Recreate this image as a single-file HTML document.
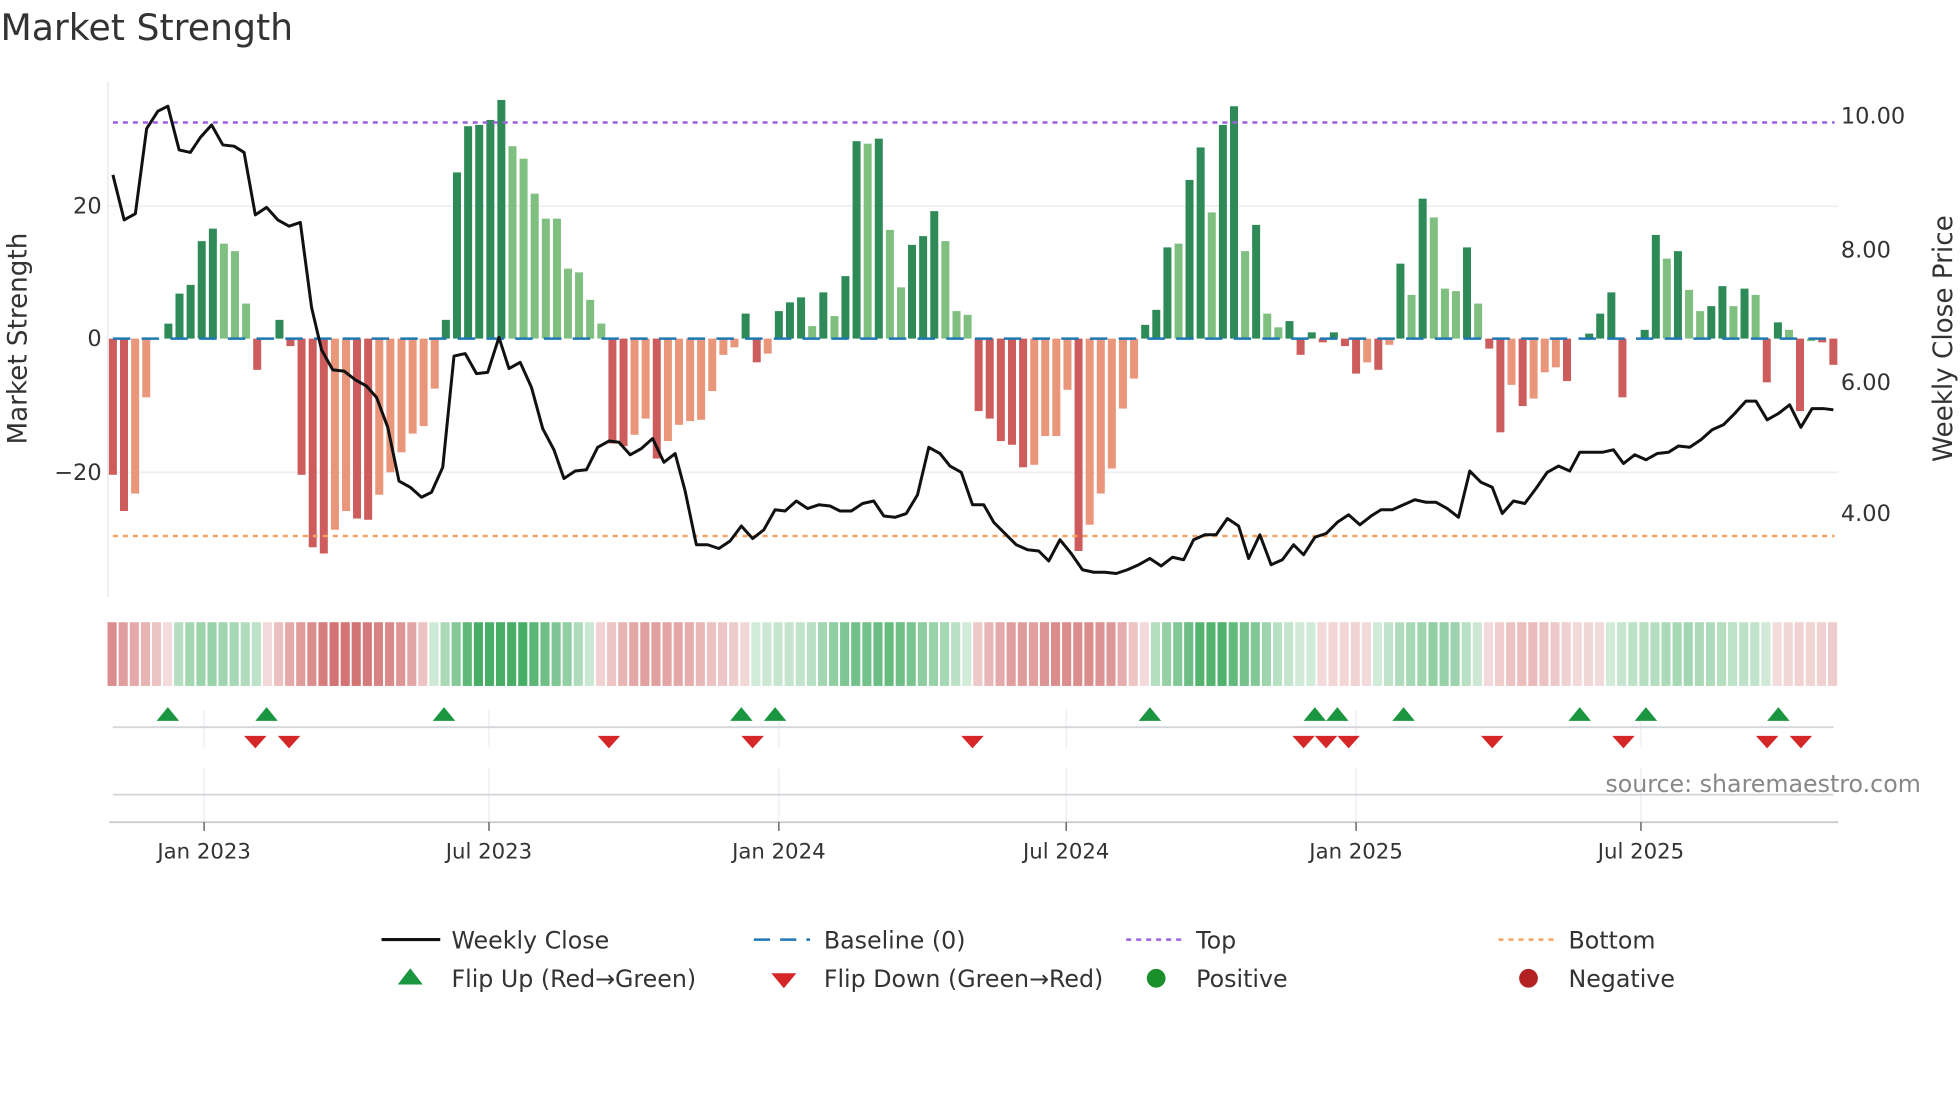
<!DOCTYPE html>
<html><head><meta charset="utf-8"><style>
html,body{margin:0;padding:0;background:#fff;}
svg{display:block;font-family:"DejaVu Sans","Liberation Sans",sans-serif;}
</style></head><body>
<svg id="s" width="1960" height="1102" viewBox="0 0 1568 882" xmlns="http://www.w3.org/2000/svg">
<rect width="1568" height="882" fill="#fff"/>
<text x="0" y="32" font-size="29" fill="#333">Market Strength</text>
<line x1="86" y1="65" x2="86" y2="478" stroke="#e6e6e6" stroke-width="1"/>
<line x1="86" y1="165" x2="1471" y2="165" stroke="#eef0f5" stroke-width="1.5"/>
<line x1="86" y1="378" x2="1471" y2="378" stroke="#eef0f5" stroke-width="1.5"/>
<g font-size="18" fill="#333" text-anchor="end">
<text x="81" y="171">20</text><text x="81" y="277">0</text><text x="81" y="384">−20</text>
</g>
<g font-size="18" fill="#333">
<text x="1473" y="99">10.00</text><text x="1473" y="206">8.00</text><text x="1473" y="312">6.00</text><text x="1473" y="417">4.00</text>
</g>
<text transform="translate(21,271) rotate(-90)" font-size="21" fill="#333" text-anchor="middle">Market Strength</text>
<text transform="translate(1562,271) rotate(-90)" font-size="21" fill="#333" text-anchor="middle">Weekly Close Price</text>
<g id="bars"></g>
<line x1="90" y1="271" x2="1468" y2="271" stroke="#1f77b4" stroke-width="2" stroke-dasharray="14,9"/>
<line x1="90" y1="98" x2="1468" y2="98" stroke="#9b5fe0" stroke-width="2" stroke-dasharray="4,4"/>
<line x1="90" y1="429" x2="1468" y2="429" stroke="#f4a261" stroke-width="2" stroke-dasharray="4,4"/>
<polyline id="price" fill="none" stroke="#111" stroke-width="2.4" stroke-linejoin="round"/>
<g id="heat"></g>
<g stroke="#e8ecf2" stroke-width="1">
<line x1="163" y1="568" x2="163" y2="598"/><line x1="391" y1="568" x2="391" y2="598"/><line x1="623" y1="568" x2="623" y2="598"/><line x1="853" y1="568" x2="853" y2="598"/><line x1="1085" y1="568" x2="1085" y2="598"/><line x1="1313" y1="568" x2="1313" y2="598"/>
<line x1="163" y1="615" x2="163" y2="658"/><line x1="391" y1="615" x2="391" y2="658"/><line x1="623" y1="615" x2="623" y2="658"/><line x1="853" y1="615" x2="853" y2="658"/><line x1="1085" y1="615" x2="1085" y2="658"/><line x1="1313" y1="615" x2="1313" y2="658"/>
</g>
<line x1="90" y1="582" x2="1467" y2="582" stroke="#d3d6da" stroke-width="1.5"/>
<line x1="90" y1="636" x2="1467" y2="636" stroke="#d3d6da" stroke-width="1.5"/>
<line x1="87" y1="658" x2="1471" y2="658" stroke="#ccc" stroke-width="1.5"/>
<g id="tri"></g>
<text x="1537" y="634" font-size="19" fill="#888" text-anchor="end">source: sharemaestro.com</text>
<g stroke="#666" stroke-width="1.2">
<line x1="163" y1="658" x2="163" y2="665"/><line x1="391" y1="658" x2="391" y2="665"/><line x1="623" y1="658" x2="623" y2="665"/><line x1="853" y1="658" x2="853" y2="665"/><line x1="1085" y1="658" x2="1085" y2="665"/><line x1="1313" y1="658" x2="1313" y2="665"/>
</g>
<g font-size="17" fill="#333" text-anchor="middle">
<text x="163" y="687">Jan 2023</text><text x="391" y="687">Jul 2023</text><text x="623" y="687">Jan 2024</text><text x="853" y="687">Jul 2024</text><text x="1085" y="687">Jan 2025</text><text x="1313" y="687">Jul 2025</text>
</g>
<g font-size="19" fill="#333">
<line x1="305" y1="752" x2="352" y2="752" stroke="#111" stroke-width="2.5"/><text x="361" y="759">Weekly Close</text>
<line x1="603" y1="752" x2="648" y2="752" stroke="#1f77b4" stroke-width="2" stroke-dasharray="13,8"/><text x="659" y="759">Baseline (0)</text>
<line x1="901" y1="752" x2="945" y2="752" stroke="#9b5fe0" stroke-width="2" stroke-dasharray="4,4"/><text x="957" y="759">Top</text>
<line x1="1199" y1="752" x2="1243" y2="752" stroke="#f4a261" stroke-width="2" stroke-dasharray="4,4"/><text x="1255" y="759">Bottom</text>
<polygon points="318,788 328,775 338,788" fill="#1a9641"/><text x="361" y="790">Flip Up (Red→Green)</text>
<polygon points="617,779 627,791 637,779" fill="#d62728"/><text x="659" y="790">Flip Down (Green→Red)</text>
<circle cx="925" cy="783" r="7.5" fill="#1a8f2a"/><text x="957" y="790">Positive</text>
<circle cx="1223" cy="783" r="7.5" fill="#b22222"/><text x="1255" y="790">Negative</text>
</g>
</svg>
<script>
var NS="http://www.w3.org/2000/svg";
function el(t,a,p){var e=document.createElementNS(NS,t);for(var k in a)e.setAttribute(k,a[k]);document.getElementById(p).appendChild(e);return e;}
var B=[[380,'R'],[409,'R'],[395,'r'],[318,'r'],[271,0],[259,'G'],[235,'G'],[228,'G'],[193,'G'],[183,'G'],[195,'g'],[201,'g'],[243,'g'],[296,'R'],[271,0],[256,'G'],[277,'R'],[380,'R'],[438,'R'],[443,'R'],[424,'r'],[409,'r'],[415,'R'],[416,'R'],[396,'r'],[378,'r'],[362,'r'],[347,'r'],[341,'r'],[311,'r'],[256,'G'],[138,'G'],[101,'G'],[100,'G'],[96,'G'],[80,'G'],[117,'g'],[127,'g'],[155,'g'],[175,'g'],[175,'g'],[215,'g'],[218,'g'],[240,'g'],[259,'g'],[355,'R'],[357,'R'],[348,'r'],[335,'r'],[367,'R'],[353,'r'],[340,'r'],[337,'r'],[336,'r'],[313,'r'],[284,'r'],[278,'r'],[251,'G'],[290,'R'],[283,'r'],[249,'G'],[242,'G'],[238,'G'],[261,'g'],[234,'G'],[253,'g'],[221,'G'],[113,'G'],[115,'g'],[111,'G'],[184,'g'],[230,'g'],[196,'G'],[189,'G'],[169,'G'],[193,'g'],[249,'g'],[252,'g'],[329,'R'],[335,'R'],[353,'R'],[356,'R'],[374,'R'],[372,'r'],[349,'r'],[349,'r'],[312,'r'],[441,'R'],[420,'r'],[395,'r'],[375,'r'],[327,'r'],[303,'r'],[260,'G'],[248,'G'],[198,'G'],[195,'g'],[144,'G'],[118,'G'],[170,'g'],[100,'G'],[85,'G'],[201,'g'],[180,'G'],[251,'g'],[262,'g'],[257,'G'],[284,'R'],[266,'G'],[274,'R'],[266,'G'],[277,'R'],[299,'R'],[290,'r'],[296,'R'],[276,'r'],[211,'G'],[236,'g'],[159,'G'],[174,'g'],[231,'g'],[233,'g'],[198,'G'],[243,'g'],[279,'R'],[346,'R'],[308,'r'],[325,'R'],[319,'r'],[298,'r'],[294,'r'],[305,'R'],[271,0],[267,'G'],[251,'G'],[234,'G'],[318,'R'],[271,0],[264,'G'],[188,'G'],[207,'g'],[201,'G'],[232,'g'],[249,'g'],[245,'G'],[229,'G'],[245,'g'],[231,'G'],[236,'g'],[306,'R'],[258,'G'],[264,'g'],[329,'R'],[273,'g'],[274,'R'],[292,'R']];
var N=B.length, x0=90, dx=(1467-90)/(N-1);
var C={G:'#2e8b57',g:'#7fbf7f',R:'#cd5c5c',r:'#e9967a'};
var vals=[];
B.forEach(function(b,i){var x=x0+i*dx;var y=b[0];vals.push((271-y)/5.3);
 if(b[1]){var t=Math.min(y,271),h=Math.abs(y-271);el('rect',{x:(x-3.2).toFixed(1),y:t,width:6.4,height:Math.max(h,1),fill:C[b[1]]},'bars');}});
for(var i=0;i<N;i++){var s=0,c=0;for(var j=Math.max(0,i-3);j<=Math.min(N-1,i+3);j++){s+=vals[j];c++;}var v=s/c;var a=Math.min(1,Math.abs(v)/26);
 var col=v>=0?'rgba(40,160,75,'+(0.2+0.65*a).toFixed(2)+')':'rgba(200,80,80,'+(0.2+0.6*a).toFixed(2)+')';
 el('rect',{x:(x0+i*dx-4.3).toFixed(1),y:498,width:(dx-1.6).toFixed(1),height:51,fill:col},'heat');}
var P=[[90,140],[99,176],[108,171],[117,103],[126,89],[134,85],[143,120],[152,122],[160,110],[169,100],[178,116],[187,117],[195,122],[204,172],[213,166],[222,176],[231,181],[240,178],[249,246],[257,280],[266,296],[275,297],[284,304],[293,309],[301,318],[310,342],[319,385],[328,390],[337,398],[345,394],[354,374],[363,285],[372,283],[381,299],[390,298],[399,270],[407,295],[416,290],[425,310],[434,343],[443,360],[451,383],[460,377],[469,376],[478,358],[487,353],[495,354],[504,364],[513,359],[522,351],[531,370],[540,363],[548,393],[557,436],[566,436],[575,439],[584,433],[593,421],[602,431],[611,424],[620,408],[628,409],[637,401],[646,407],[655,404],[664,405],[672,409],[681,409],[690,403],[699,401],[707,413],[716,414],[725,411],[734,396],[743,358],[752,363],[760,373],[769,378],[778,404],[787,404],[795,418],[804,427],[813,436],[822,440],[831,441],[839,449],[848,432],[857,443],[866,456],[875,458],[884,458],[893,459],[902,456],[911,452],[920,447],[929,453],[938,446],[947,448],[955,432],[964,428],[973,428],[982,415],[991,421],[999,447],[1008,428],[1017,452],[1026,448],[1035,436],[1043,444],[1052,430],[1061,427],[1070,418],[1079,412],[1088,420],[1097,413],[1105,408],[1114,408],[1123,404],[1132,400],[1141,402],[1149,402],[1158,407],[1167,414],[1176,377],[1185,386],[1194,390],[1202,411],[1211,401],[1220,403],[1229,391],[1238,378],[1247,373],[1256,377],[1264,362],[1273,362],[1282,362],[1291,360],[1299,371],[1308,364],[1317,368],[1326,363],[1335,362],[1343,357],[1352,358],[1361,352],[1370,344],[1379,340],[1388,331],[1397,321],[1405,321],[1414,336],[1423,331],[1432,324],[1441,342],[1450,327],[1459,327],[1467,328]];
document.getElementById('price').setAttribute('points',P.map(function(p){return p.join(',')}).join(' '));
[134,213,355,593,620,920,1052,1070,1123,1264,1317,1423].forEach(function(x){el('polygon',{points:(x-9)+',577 '+x+',566 '+(x+9)+',577',fill:'#1a9641'},'tri');});
[204,231,487,602,778,1043,1061,1079,1194,1299,1414,1441].forEach(function(x){el('polygon',{points:(x-9)+',589 '+x+',599 '+(x+9)+',589',fill:'#d62728'},'tri');});
</script>
</body></html>
